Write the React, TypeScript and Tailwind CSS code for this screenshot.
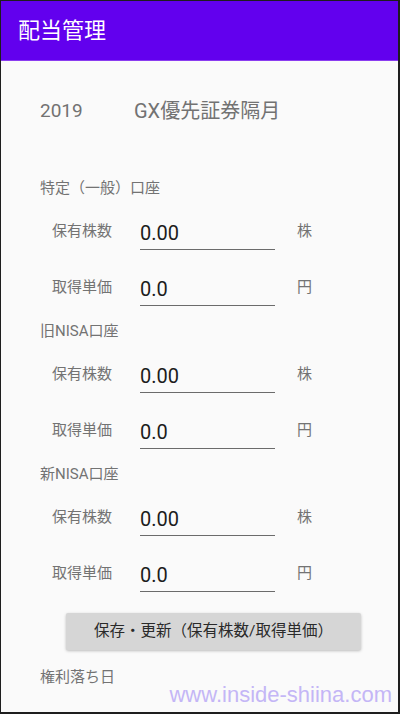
const FONT = "font-['Roboto','Noto_Sans_CJK_JP',sans-serif]";

const SECTIONS = [
  { title: "特定（一般）口座", shares: "0.00", price: "0.0" },
  { title: "旧NISA口座", shares: "0.00", price: "0.0" },
  { title: "新NISA口座", shares: "0.00", price: "0.0" },
];

function FieldRow({ label, value, unit }: { label: string; value: string; unit: string }) {
  return (
    <div className="flex h-[56px] items-center">
      <span className="w-[100px] pl-[12px] text-[15px] leading-[22px] text-[#737373]">{label}</span>
      <div className="mt-[4px] flex h-[34px] w-[135px] items-center border-b border-[#6b6b6b]">
        <span className="text-[20px] leading-[28px] text-[#1c1c1c]">{value}</span>
      </div>
      <span className="ml-[22px] mt-[-1px] text-[15px] leading-[22px] text-[#737373]">{unit}</span>
    </div>
  );
}

export default function App() {
  return (
    <div className={`${FONT} relative h-[714px] w-[400px] overflow-hidden border-l border-r-2 border-t border-b-2 border-[#1e1e1e] bg-[#fafafa]`}>
      <header className="flex h-[60px] items-center border-b border-[#8a3cf0] bg-[#6200ee] pl-[17px]">
        <h1 className="text-[22px] font-normal leading-[30px] text-white">配当管理</h1>
      </header>

      <div className="pl-[39px]">
        <div className="flex h-[111px] items-start pt-[37px] leading-[26px] text-[#727272]">
          <span className="w-[94px] text-[19px]">2019</span>
          <span className="text-[20px]">GX優先証券隔月</span>
        </div>

        {SECTIONS.map((section) => (
          <section key={section.title}>
            <div className="flex h-[31px] items-center text-[15px] leading-[22px] text-[#737373]">
              {section.title}
            </div>
            <FieldRow label="保有株数" value={section.shares} unit="株" />
            <FieldRow label="取得単価" value={section.price} unit="円" />
          </section>
        ))}
      </div>

      <div className="mt-[12px] flex pl-[65px] pr-[37px]">
        <button
          type="button"
          className="flex h-[37px] w-full items-center justify-center rounded-[2px] bg-[#d6d6d6] text-[15.5px] text-[#2a2a2a] shadow-[0_1px_3px_rgba(0,0,0,0.25)]"
        >
          保存・更新（保有株数/取得単価）
        </button>
      </div>

      <p className="mt-[16px] pl-[39px] text-[15px] leading-[22px] text-[#737373]">権利落ち日</p>

      <span className="absolute right-[6px] bottom-[4px] font-['Liberation_Sans',sans-serif] text-[22px] leading-[26px] text-[#c4b6f6]">
        www.inside-shiina.com
      </span>
    </div>
  );
}
